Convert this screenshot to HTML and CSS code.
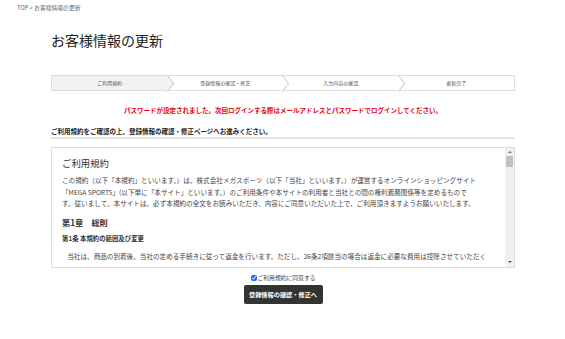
FILE: index.html
```html
<!DOCTYPE html>
<html lang="ja">
<head>
<meta charset="utf-8">
<title>お客様情報の更新</title>
<link rel="stylesheet" href="styles.css">
</head>
<body>
<nav class="breadcrumb">TOP &gt; お客様情報の更新</nav>
<main class="page">
  <h1 class="title">お客様情報の更新</h1>
  <ol class="steps">
    <li class="step is-current">ご利用規約</li>
    <li class="step">登録情報の確認・修正</li>
    <li class="step">入力内容の確認</li>
    <li class="step is-last">更新完了</li>
  </ol>
  <p class="notice">パスワードが設定されました。次回ログインする際はメールアドレスとパスワードでログインしてください。</p>
  <p class="lead">ご利用規約をご確認の上、登録情報の確認・修正ページへお進みください。</p>
  <section class="terms">
    <div class="terms-body">
      <div class="terms-content">
        <h2 class="terms-title">ご利用規約</h2>
        <p class="terms-text">この規約（以下「本規約」といいます。）は、株式会社メガスポーツ（以下「当社」といいます。）が運営するオンラインショッピングサイト「MEGA SPORTS」(以下単に「本サイト」といいます。）のご利用条件や本サイトの利用者と当社との間の権利義務関係等を定めるもので<br>す。従いまして、本サイトは、必ず本規約の全文をお読みいただき、内容にご同意いただいた上で、ご利用頂きますようお願いいたします。</p>
        <h3 class="chapter">第1章　総則</h3>
        <h4 class="article">第1条 本規約の範囲及び変更</h4>
        <p class="terms-text indent">当社は、商品の到着後、当社の定める手続きに従って返金を行います。ただし、26条2項該当の場合は返金に必要な費用は控除させていただく</p>
      </div>
    </div>
    <div class="scrollbar">
      <span class="sb-arrow up"></span>
      <span class="sb-track"><span class="sb-thumb"></span></span>
      <span class="sb-arrow down"></span>
    </div>
  </section>
  <label class="agree"><input type="checkbox" class="agree-box" checked> ご利用規約に同意する</label>
  <div class="actions">
    <button class="btn" type="button">登録情報の確認・修正へ</button>
  </div>
</main>
</body>
</html>
```
FILE: styles.css
```css
* { box-sizing: border-box; }
html, body { margin: 0; padding: 0; background: #fff; }
body {
  font-family: "Noto Sans CJK JP", "Noto Sans", sans-serif;
  color: #333;
}
.breadcrumb {
  padding: 4px 17px 0;
  font-size: 5.8px;
  line-height: 8px;
  color: #666;
}
.page {
  width: 464px;
  margin: 0 0 0 51px;
}
.title {
  margin: 18px 0 0;
  font-size: 14px;
  line-height: 20px;
  font-weight: 400;
  color: #222;
}
.steps {
  list-style: none;
  margin: 25px 0 0;
  padding: 0;
  display: flex;
  border: 1px solid #ddd;
  height: 16px;
}
.step {
  position: relative;
  flex: 1;
  text-align: center;
  font-size: 5px;
  line-height: 14px;
  color: #555;
  background: #fff;
}
.step.is-current { background: #f2f2f3; }
.step::after {
  content: "";
  position: absolute;
  top: 2px;
  right: -5px;
  width: 10px;
  height: 10px;
  border-top: 1px solid #ccc;
  border-right: 1px solid #ccc;
  background: inherit;
  transform: rotate(45deg) skew(8deg, 8deg);
  z-index: 1;
}
.step.is-last::after { display: none; }
.notice {
  margin: 14px 0 0;
  text-align: center;
  font-size: 6.5px;
  line-height: 10px;
  font-weight: 700;
  color: #e60012;
}
.lead {
  margin: 11px 0 0;
  padding-bottom: 1px;
  border-bottom: 2px solid #e4e4e4;
  font-size: 6.5px;
  line-height: 10px;
  font-weight: 700;
  color: #222;
}
.terms {
  margin-top: 8px;
  height: 121px;
  border: 1px solid #ddd;
  display: flex;
  overflow: hidden;
}
.terms-body {
  flex: 1;
  padding: 8px 17px 0 10px;
}
.terms-content {
  height: 107px;
  overflow: hidden;
}
.terms-title {
  margin: 0;
  font-size: 9.4px;
  line-height: 14px;
  font-weight: 400;
  color: #333;
}
.terms-text {
  margin: 5px 0 0;
  font-size: 6.6px;
  line-height: 11.5px;
  color: #444;
}
.chapter {
  margin: 6px 0 0;
  font-size: 8.2px;
  line-height: 13px;
  font-weight: 700;
  color: #333;
}
.article {
  margin: 4px 0 0;
  font-size: 6.4px;
  line-height: 11px;
  font-weight: 700;
  color: #333;
}
.terms-text.indent {
  margin-top: 7.5px;
  text-indent: 0.8em;
}
.scrollbar {
  width: 9px;
  background: #f1f1f1;
  display: flex;
  flex-direction: column;
  align-items: center;
}
.sb-arrow {
  width: 0;
  height: 0;
  border-left: 2px solid transparent;
  border-right: 2px solid transparent;
  margin: 3px 0;
}
.sb-arrow.up { border-bottom: 2px solid #777; }
.sb-arrow.down { border-top: 2px solid #555; margin-bottom: 4px; }
.sb-track {
  flex: 1;
  width: 100%;
  padding: 0 1px;
}
.sb-thumb {
  display: block;
  height: 11px;
  background: #c1c1c1;
}
.agree {
  display: flex;
  align-items: center;
  justify-content: center;
  margin-top: 6px;
  font-size: 5.8px;
  line-height: 8px;
  color: #444;
  gap: 1px;
}
.agree-box {
  width: 6px;
  height: 6px;
  margin: 0;
  accent-color: #1a73e8;
}
.actions {
  display: flex;
  justify-content: center;
  margin-top: 3px;
}
.btn {
  width: 79px;
  height: 19px;
  border: 0;
  border-radius: 2px;
  background: #333;
  color: #fff;
  font-family: inherit;
  font-size: 6.2px;
  font-weight: 700;
  padding: 0;
}
```
